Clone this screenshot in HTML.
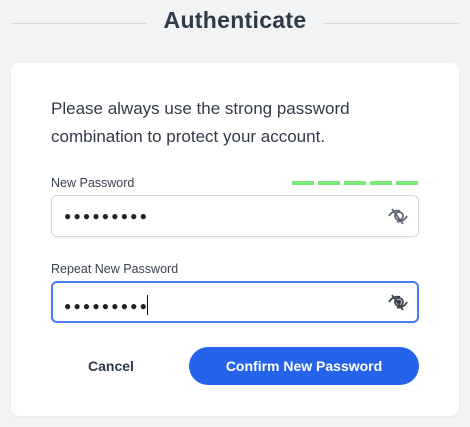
<!DOCTYPE html>
<html><head><style>
body{margin:0;width:470px;height:427px;background:#f2f3f5;font-family:"Liberation Sans",sans-serif;position:relative;overflow:hidden;color:#2d3748}
.ln{position:absolute;top:23px;height:1px;background:#d4d6da}
h1{position:absolute;top:7px;left:0;width:470px;text-align:center;margin:0;font-size:23px;font-weight:bold;color:#2f3a4b;letter-spacing:0.3px}
.card{position:absolute;left:11px;top:63px;width:448px;height:353px;background:#fff;border-radius:8px;box-shadow:0 1px 2px rgba(0,0,0,.05)}
p{position:absolute;left:40px;top:32px;margin:0;font-size:17px;line-height:28px;color:#333a47;width:380px}
.lab{position:absolute;left:40px;font-size:12.5px;color:#3a4150}
.inp{position:absolute;left:40px;height:42px;border:1px solid #d5d7db;border-radius:6px;box-sizing:border-box;width:368px;box-shadow:0 1px 2px rgba(0,0,0,.06)}
.dots{position:absolute;left:12px;top:13px;font-size:12px;letter-spacing:2.2px;color:#222}
.eye{position:absolute;right:9px;top:10px}
.d{position:absolute;top:118px;height:4px;width:22px;background:#7be87a}
.btn{position:absolute;top:284px;height:38px;border-radius:19px;font-size:14px;font-weight:bold;text-align:center;line-height:38px}
</style></head><body>
<div class="ln" style="left:11px;width:135px"></div>
<div class="ln" style="left:323px;width:136px"></div>
<h1>Authenticate</h1>
<div class="card">
<p>Please always use the strong password combination to protect your account.</p>
<div class="lab" style="top:113px">New Password</div>
<div class="d" style="left:281px"></div><div class="d" style="left:307px"></div><div class="d" style="left:333px"></div><div class="d" style="left:359px"></div><div class="d" style="left:385px"></div>
<div class="inp" style="top:132px"><span class="dots">●●●●●●●●●</span>
<svg class="eye" width="22" height="20" viewBox="0 0 22 20" fill="none" stroke="#5f6672" stroke-width="1.8"><path d="M2 10c3-5 8-6 11-5M20 10c-2 4-6 6-10 5.5"/><circle cx="12" cy="10" r="4"/><path d="M5 3l11 15"/></svg></div>
<div class="lab" style="top:199px">Repeat New Password</div>
<div class="inp" style="top:218px;border:2px solid #4a7cf0"><span class="dots" style="left:11px;top:12px">●●●●●●●●●<span style="display:inline-block;width:1px;height:20px;background:#111;vertical-align:-5px;margin-left:-2px"></span></span>
<svg class="eye" style="right:8px;top:9px" width="22" height="20" viewBox="0 0 22 20" fill="none" stroke="#3d434d" stroke-width="1.8"><path d="M2 10c3-5 8-6 11-5M20 10c-2 4-6 6-10 5.5"/><circle cx="12" cy="10" r="4"/><circle cx="12" cy="10" r="1.5" fill="#222"/><path d="M5 3l11 15"/></svg></div>
<div class="btn" style="left:50px;width:100px;color:#2f3a4b">Cancel</div>
<div class="btn" style="left:178px;width:230px;background:#2563eb;color:#fff">Confirm New Password</div>
</div>
</body></html>
